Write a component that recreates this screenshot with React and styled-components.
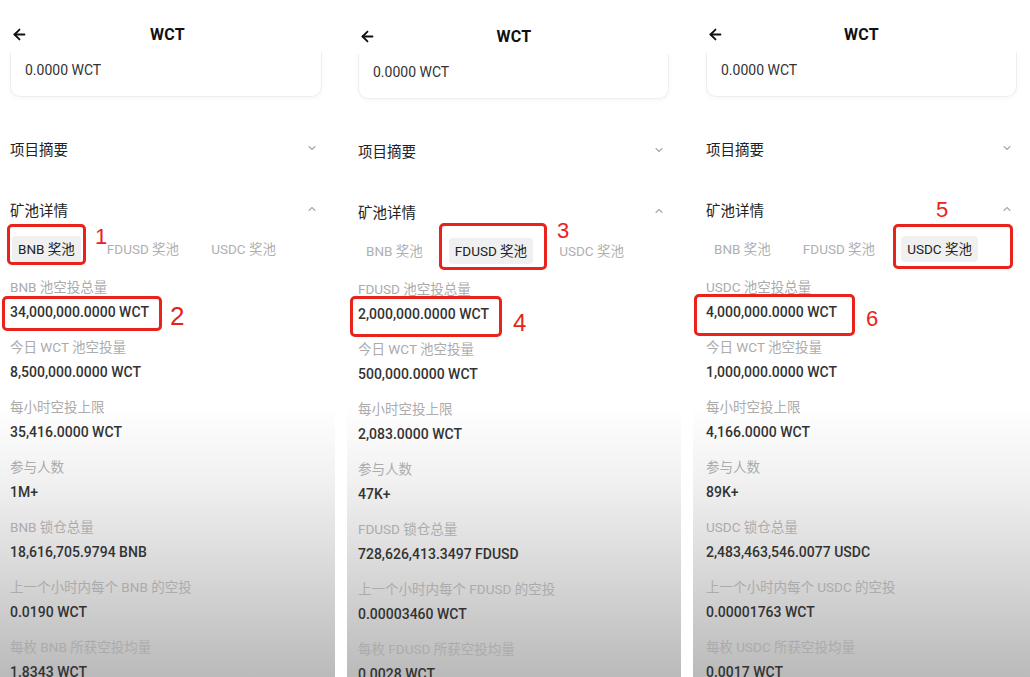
import React from 'react'
import styled, { createGlobalStyle } from 'styled-components'
import { ArrowLeft, ChevronDown, ChevronUp } from 'lucide-react'

const GlobalStyle = createGlobalStyle`
  html, body {
    margin: 0;
    padding: 0;
    background: #ffffff;
  }
  body {
    font-family: Roboto, "Noto Sans", "Noto Sans CJK SC", sans-serif;
    -webkit-font-smoothing: antialiased;
  }
`

const coins = {
    BNB: {
        total: '34,000,000.0000 WCT',
        today: '8,500,000.0000 WCT',
        hourly: '35,416.0000 WCT',
        people: '1M+',
        locked: '18,616,705.9794 BNB',
        lastHour: '0.0190 WCT',
        avg: '1.8343 WCT',
    },
    FDUSD: {
        total: '2,000,000.0000 WCT',
        today: '500,000.0000 WCT',
        hourly: '2,083.0000 WCT',
        people: '47K+',
        locked: '728,626,413.3497 FDUSD',
        lastHour: '0.00003460 WCT',
        avg: '0.0028 WCT',
    },
    USDC: {
        total: '4,000,000.0000 WCT',
        today: '1,000,000.0000 WCT',
        hourly: '4,166.0000 WCT',
        people: '89K+',
        locked: '2,483,463,546.0077 USDC',
        lastHour: '0.00001763 WCT',
        avg: '0.0017 WCT',
    },
}

const panels = [
    {
        coin: 'BNB', shift: 0, pad: 10, right: 17,
        marks: [
            { box: [7, 224, 79, 41], num: '1', at: [95, 226], size: 22 },
            { box: [2, 296, 160, 35], num: '2', at: [170, 303], size: 26 },
        ],
    },
    {
        coin: 'FDUSD', shift: 2, pad: 11, right: 16,
        marks: [
            { box: [92, 223, 108, 47], num: '3', at: [210, 220], size: 22 },
            { box: [3, 296, 152, 41], num: '4', at: [166, 311], size: 24 },
        ],
    },
    {
        coin: 'USDC', shift: 0, pad: 13, right: 17,
        marks: [
            { box: [200, 224, 120, 45], num: '5', at: [243, 199], size: 22 },
            { box: [1, 294, 161, 42], num: '6', at: [173, 308], size: 22 },
        ],
    },
]

const Phone = ({ coin, shift, pad, right, marks }) => {
    const d = coins[coin]
    const items = [
        [`${coin} 池空投总量`, d.total],
        ['今日 WCT 池空投量', d.today],
        ['每小时空投上限', d.hourly],
        ['参与人数', d.people],
        [`${coin} 锁仓总量`, d.locked],
        [`上一个小时内每个 ${coin} 的空投`, d.lastHour],
        [`每枚 ${coin} 所获空投均量`, d.avg],
    ]
    return (
        <Panel $shift={shift}>
            <Header $pad={pad}>
                <ArrowLeft size={17} strokeWidth={2.6} color="#111" />
                <Title>WCT</Title>
                <span />
            </Header>
            <Card $pad={pad} $right={right}>0.0000 WCT</Card>
            <Body $pad={pad} $right={right}>
                <AccordionHead $gap={40}>
                    项目摘要
                    <ChevronDown size={12} strokeWidth={2.2} color="#a8a8a8" />
                </AccordionHead>
                <AccordionHead $gap={39}>
                    矿池详情
                    <ChevronUp size={12} strokeWidth={2.2} color="#a8a8a8" />
                </AccordionHead>
                <Tabs>
                    {['BNB', 'FDUSD', 'USDC'].map((t) => (
                        <Tab key={t} $active={t === coin}>{t} 奖池</Tab>
                    ))}
                </Tabs>
                <List>
                    {items.map(([label, value]) => (
                        <Item key={label}>
                            <Label>{label}</Label>
                            <Value>{value}</Value>
                        </Item>
                    ))}
                </List>
            </Body>
            {marks.map((m) => (
                <React.Fragment key={m.num}>
                    <MarkBox style={{ left: m.box[0], top: m.box[1], width: m.box[2], height: m.box[3] }} />
                    <MarkNum style={{ left: m.at[0], top: m.at[1], fontSize: m.size }}>{m.num}</MarkNum>
                </React.Fragment>
            ))}
        </Panel>
    )
}

const App = () => {
    return (
        <>
            <GlobalStyle />
            <Page>
                {panels.map((p) => (
                    <Phone key={p.coin} {...p} />
                ))}
            </Page>
        </>
    )
}

export default App

const Page = styled.div`
    display: grid;
    grid-template-columns: 335px 334px 337px;
    column-gap: 12px;
    width: 1030px;
    height: 677px;
    overflow: hidden;
    background: #ffffff;
`

const Panel = styled.div`
    position: relative;
    height: 677px;
    overflow: hidden;
    padding-top: ${(p) => p.$shift}px;
    box-sizing: border-box;
    background: linear-gradient(180deg, #ffffff 0%, #ffffff 60%, #f1f1f1 71%, #d9d9d9 84%, #bababa 100%);
`

const Header = styled.div`
    display: grid;
    grid-template-columns: 1fr auto 1fr;
    align-items: center;
    height: 28px;
    margin-top: 20px;
    padding: 0 ${(p) => p.$pad + 1}px;
`

const Title = styled.div`
    font-size: 16px;
    font-weight: 700;
    color: #111;
    letter-spacing: 0.2px;
`

const Card = styled.div`
    margin: 4px ${(p) => p.$right - 4}px 0 ${(p) => p.$pad}px;
    padding: 8px 14px 16px;
    font-size: 14px;
    line-height: 20px;
    color: #333;
    border: 1px solid #eeeeee;
    border-top: none;
    border-radius: 0 0 10px 10px;
    box-shadow: 0 2px 4px rgba(0, 0, 0, 0.03);
`

const Body = styled.div`
    padding: 0 ${(p) => p.$right}px 0 ${(p) => p.$pad}px;
`

const AccordionHead = styled.div`
    display: flex;
    align-items: center;
    justify-content: space-between;
    height: 22px;
    margin-top: ${(p) => p.$gap}px;
    font-family: "Noto Sans CJK SC", sans-serif;
    font-size: 14.5px;
    font-weight: 400;
    color: #222;
`

const Tabs = styled.div`
    display: flex;
    gap: 20px;
    margin: 16px 0 0 2px;
`

const Tab = styled.div`
    height: 26px;
    line-height: 26px;
    padding: 0 6px;
    border-radius: 4px;
    font-size: 13.5px;
    white-space: nowrap;
    color: ${(p) => (p.$active ? '#222' : '#b0b0b0')};
    font-weight: 400;
    background: ${(p) => (p.$active ? '#f0f0f0' : 'transparent')};
`

const List = styled.div`
    display: flex;
    flex-direction: column;
    gap: 15px;
    margin-top: 15px;
`

const Item = styled.div`
    display: flex;
    flex-direction: column;
    gap: 5px;
`

const Label = styled.div`
    font-size: 13.5px;
    line-height: 20px;
    color: #ababab;
    white-space: nowrap;
`

const Value = styled.div`
    font-size: 14px;
    line-height: 20px;
    font-weight: 500;
    color: #333;
    white-space: nowrap;
`

const MarkBox = styled.div`
    position: absolute;
    box-sizing: border-box;
    border: 3.5px solid #e8231c;
    border-radius: 5px;
`

const MarkNum = styled.div`
    position: absolute;
    line-height: 1;
    font-family: "Liberation Sans", sans-serif;
    color: #e8231c;
`
